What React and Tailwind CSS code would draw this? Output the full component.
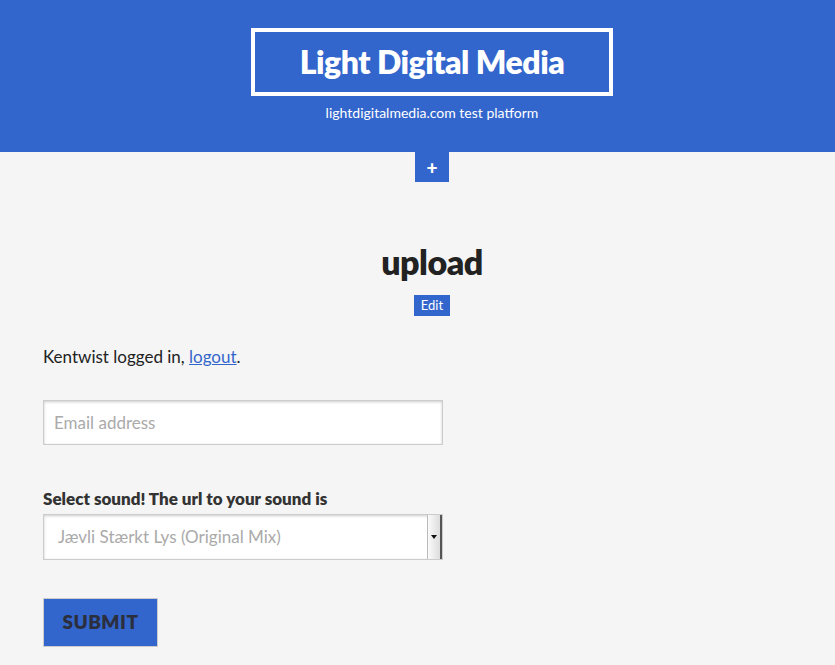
import React from "react";

export default function App() {
  return (
    <div className="min-h-[665px] bg-[#f5f5f5] font-['Lato',sans-serif] text-[#222]">
      {/* header */}
      <header className="bg-[#3366cc] h-[152px] flex flex-col items-center pt-[28px] pl-[29px]">
        <div className="w-[362px] h-[68px] border-[4px] border-white flex items-center justify-center">
          <h1 className="text-white text-[32px] font-extrabold tracking-[-0.5px]">Light Digital Media</h1>
        </div>
        <p className="text-white text-[14px] mt-[6px]">lightdigitalmedia.com test platform</p>
      </header>
      <div className="flex justify-center pl-[29px]">
        <div className="w-[34px] h-[30px] bg-[#3366cc] text-white font-black text-[19px] flex items-center justify-center leading-none">+</div>
      </div>

      <main className="px-[43px]">
        <div className="pl-[29px]">
          <h2 className="text-center text-[34px] font-extrabold mt-[60px] leading-[40px] tracking-[-0.5px]">upload</h2>
          <div className="flex justify-center mt-[13px]">
            <span className="bg-[#3366cc] text-white text-[13px] px-[7px] h-[21px] flex items-center">Edit</span>
          </div>
        </div>

        <p className="text-[17px] mt-[28px]">
          Kentwist logged in, <a href="#" className="text-[#3366cc] underline">logout</a>.
        </p>

        <input
          type="text"
          placeholder="Email address"
          className="mt-[30px] block w-[400px] h-[45px] bg-white border border-[#ccc] shadow-[inset_0_1px_3px_rgba(0,0,0,0.2)] px-[10px] text-[17px] placeholder:text-[#aaa] outline-none"
        />

        <label className="block text-[17px] font-extrabold text-[#333] mt-[41px]">Select sound! The url to your sound is</label>
        <div className="mt-[3px] w-[400px] h-[46px] bg-white border border-[#ccc] shadow-[inset_0_1px_3px_rgba(0,0,0,0.2)] flex items-center">
          <span className="flex-1 px-[14px] text-[17px] text-[#aaa]">Jævli Stærkt Lys (Original Mix)</span>
          <div className="w-[15px] h-full bg-gradient-to-r from-[#fafafa] to-[#ddd] border-l border-[#bbb] border-r-2 border-r-[#555] flex items-center justify-center">
            <svg width="6" height="4" viewBox="0 0 6 4"><path d="M0 0h6L3 4z" fill="#111" /></svg>
          </div>
        </div>

        <button className="mt-[38px] w-[115px] h-[49px] bg-[#3366cc] border border-[#ccc] text-[#2b2f3d] font-extrabold text-[19px] tracking-[0.5px]">
          SUBMIT
        </button>
      </main>
    </div>
  );
}
